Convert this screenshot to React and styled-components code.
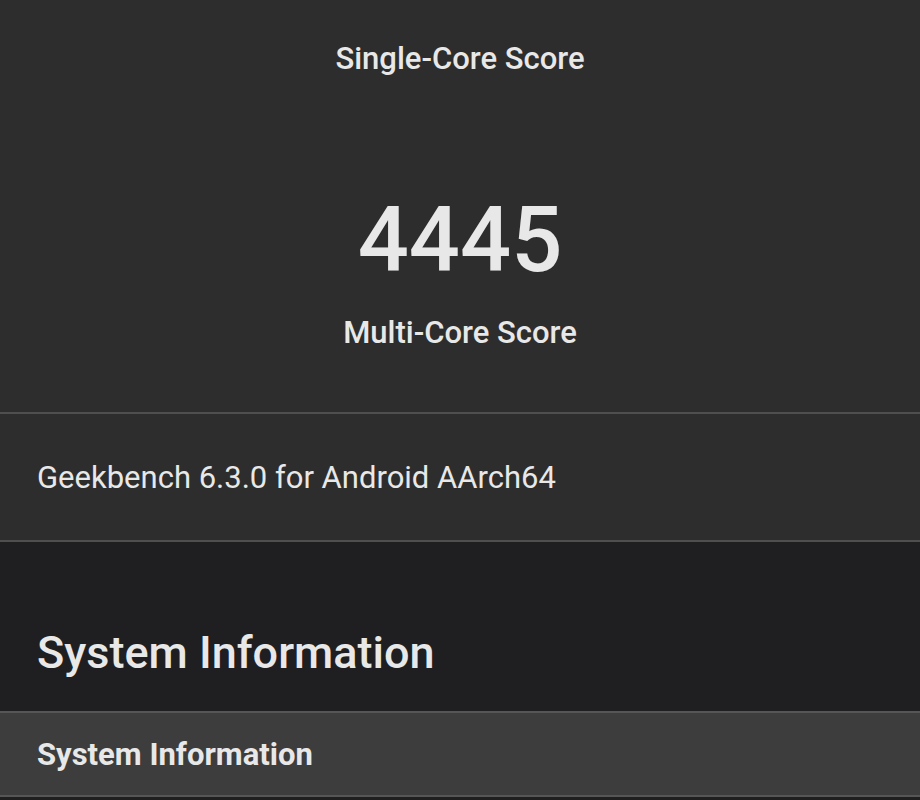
import React from 'react'
import styled, { createGlobalStyle } from 'styled-components'

const Global = createGlobalStyle`
    body{
        margin:0;
        background:#1f1f21;
        font-family: Roboto, "Noto Sans", sans-serif;
        color:#e8e8e8;
    }
`

const ScorePanel = styled.section`
    background:#2d2d2d;
    display:flex;
    flex-direction:column;
    align-items:center;
    height:414px;
    box-sizing:border-box;
    padding-top:41px;
    border-bottom:2px solid #4f4f4f;
`

const ScoreLabel = styled.p`
    margin:${p => p.$top || 0}px 0 0;
    font-size:31px;
    font-weight:500;
    line-height:36px;
`

const ScoreValue = styled.p`
    margin:114px 0 0;
    font-size:90px;
    font-weight:500;
    line-height:100px;
`

const VersionRow = styled.div`
    background:#2d2d2d;
    height:128px;
    box-sizing:border-box;
    padding:0 37px;
    display:flex;
    align-items:center;
    font-size:31px;
    border-bottom:2px solid #4f4f4f;
`

const Section = styled.section`
    background:#1f1f21;
    padding:85px 37px 0;
    height:169px;
    box-sizing:border-box;
`

const Heading = styled.h2`
    margin:0;
    font-size:45px;
    font-weight:500;
    line-height:52px;
`

const TableHead = styled.div`
    background:#3d3d3d;
    border-top:2px solid #565656;
    border-bottom:2px solid #565656;
    height:86px;
    box-sizing:border-box;
    padding:0 37px;
    display:flex;
    align-items:center;
    font-size:31px;
    font-weight:700;
`

export default function App() {
    return (
        <>
            <Global />
            <ScorePanel>
                <ScoreLabel>Single-Core Score</ScoreLabel>
                <ScoreValue>4445</ScoreValue>
                <ScoreLabel $top={24}>Multi-Core Score</ScoreLabel>
            </ScorePanel>
            <VersionRow>Geekbench 6.3.0 for Android AArch64</VersionRow>
            <Section>
                <Heading>System Information</Heading>
            </Section>
            <TableHead>System Information</TableHead>
        </>
    )
}
